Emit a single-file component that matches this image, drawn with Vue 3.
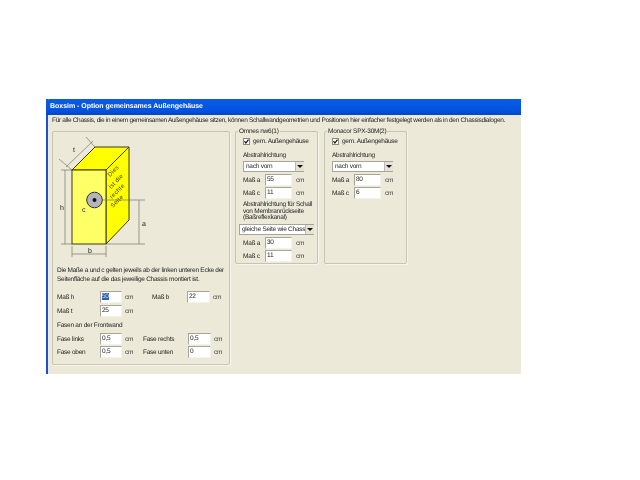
<script setup>
const chassis = [
  {
    name: 'Omnes nw6(1)', cls: 'g-omnes', a: '55', c: '11',
    back: { a: '30', c: '11' }
  },
  { name: 'Monacor SPX-30M(2)', cls: 'g-monacor', a: '80', c: '6' }
]
</script>

<template>
  <div class="page">
    <div class="window">
      <div class="title">Boxsim - Option gemeinsames Außengehäuse</div>
      <div class="body">
        <p class="intro">Für alle Chassis, die in einem gemeinsamen Außengehäuse sitzen, können Schallwandgeometrien und Positionen hier einfacher festgelegt werden als in den Chassisdialogen.</p>
        <div class="panels">
          <div class="group g-main">
            <svg class="diagram" width="120" height="128" viewBox="52 131 120 128">
              <g fill="none" stroke="#77776a" stroke-width="0.7">
                <path d="M60 169H71M60 243H71M64 169V243" />
                <path d="M71 169L58 158M94 146L85 136M65 166L92 140" />
                <path d="M105 243H144M102 199H144M138 199V243" />
                <path d="M71 253H105M71 245V256M105 245V256" />
                <path d="M71 213H94M94 207V216" />
              </g>
              <path d="M71 169L94 146H128L105 169Z" fill="#ffff00" stroke="#3a3a10" />
              <path d="M105 169L128 146V219L105 243Z" fill="#ffff00" stroke="#3a3a10" />
              <rect x="71" y="169" width="34" height="74" fill="#ffff66" stroke="#3a3a10" />
              <path d="M102 199H128" fill="none" stroke="#77776a" stroke-width="0.7" />
              <circle cx="93.5" cy="199" r="7.8" fill="#b4b4bc" stroke="#333" stroke-width="1" />
              <circle cx="93.5" cy="199" r="2" fill="#111" />
              <g class="side-text">
                <text transform="translate(109 176) rotate(-45)">Dies</text>
                <text transform="translate(110 188) rotate(-45)">ist die</text>
                <text transform="translate(111 198) rotate(-45)">rechte</text>
                <text transform="translate(112 207) rotate(-45)">Seite</text>
              </g>
              <g class="dim">
                <text x="72" y="151">t</text>
                <text x="59" y="209">h</text>
                <text x="81" y="211">c</text>
                <text x="141" y="225">a</text>
                <text x="87" y="252">b</text>
              </g>
            </svg>
            <p class="note">Die Maße a und c gelten jeweils ab der linken unteren Ecke der<br />Seitenfläche auf die das jeweilige Chassis montiert ist.</p>
            <div class="row r1">
              <span class="lab l43">Maß h</span><span class="inp sel-inp w22"><i>50</i></span><span class="cm">cm</span>
              <span class="lab l35 gap-b">Maß b</span><span class="inp w23">22</span><span class="cm">cm</span>
            </div>
            <div class="row r2">
              <span class="lab l43">Maß t</span><span class="inp w22">25</span><span class="cm">cm</span>
            </div>
            <div class="sub">Fasen an der Frontwand</div>
            <div class="row r3">
              <span class="lab l43">Fase links</span><span class="inp w22">0,5</span><span class="cm">cm</span>
              <span class="lab l45 gap-f">Fase rechts</span><span class="inp w23">0,5</span><span class="cm">cm</span>
            </div>
            <div class="row r4">
              <span class="lab l43">Fase oben</span><span class="inp w22">0,5</span><span class="cm">cm</span>
              <span class="lab l45 gap-f">Fase unten</span><span class="inp w23">0</span><span class="cm">cm</span>
            </div>
          </div>

          <div v-for="c in chassis" :key="c.name" class="group" :class="c.cls">
            <span class="legend">{{ c.name }}</span>
            <div class="check">
              <svg width="7" height="7" viewBox="0 0 7 7"><rect x="0.5" y="0.5" width="6" height="6" fill="#fff" stroke="#8a8a7a" /><path d="M1.5 3.2L2.9 5L5.5 1.6" fill="none" stroke="#111" stroke-width="1.2" /></svg>
              <span>gem. Außengehäuse</span>
            </div>
            <div class="dir">Abstrahlrichtung</div>
            <div class="combo"><span>nach vorn</span><b class="arrow"></b></div>
            <div class="pair"><span class="lab l22">Maß a</span><span class="inp w27">{{ c.a }}</span><span class="cm">cm</span></div>
            <div class="pair"><span class="lab l22">Maß c</span><span class="inp w27">{{ c.c }}</span><span class="cm">cm</span></div>
            <template v-if="c.back">
              <div class="back">Abstrahlrichtung für Schall<br />von Membranrückseite<br />(Baßreflexkanal)</div>
              <div class="combo wide"><span class="clip">gleiche Seite wie Chass</span><b class="arrow"></b></div>
              <div class="pair"><span class="lab l22">Maß a</span><span class="inp w27">{{ c.back.a }}</span><span class="cm">cm</span></div>
              <div class="pair"><span class="lab l22">Maß c</span><span class="inp w27">{{ c.back.c }}</span><span class="cm">cm</span></div>
            </template>
          </div>
        </div>
      </div>
    </div>
  </div>
</template>

<style>
html, body { margin: 0; background: #fff; }
</style>

<style scoped>
.page {
  width: 640px;
  height: 480px;
  padding: 99px 0 0 46px;
  box-sizing: border-box;
  overflow: hidden;
  background: #fff;
  font-family: "Liberation Sans", Arial, sans-serif;
  font-size: 6.5px;
  letter-spacing: -0.25px;
  text-rendering: geometricPrecision;
  color: #1c1c1c;
}
.window {
  width: 475px;
  height: 275px;
  display: flex;
  flex-direction: column;
  border-left: 2px solid #1d50cc;
  box-sizing: border-box;
  filter: blur(0.3px);
}
.title {
  height: 16px;
  margin-left: -2px;
  padding-left: 4px;
  line-height: 16px;
  font-size: 7px;
  font-weight: bold;
  letter-spacing: -0.03px;
  color: #fff;
  border-top-left-radius: 4px;
  background: linear-gradient(#0a5ce6, #0353e0 70%, #0246c4);
}
.body {
  flex: 1;
  background: #ece9d8;
  padding: 0 0 0 4px;
  min-height: 0;
}
.intro {
  margin: 0;
  height: 16px;
  line-height: 12px;
  letter-spacing: -0.31px;
  white-space: nowrap;
}
.panels {
  display: flex;
  align-items: flex-start;
  gap: 6px;
}
.group {
  position: relative;
  flex: none;
  box-sizing: border-box;
  border: 1px solid #c6c4b2;
  border-radius: 2px;
  box-shadow: 1px 1px 0 #f6f5ec;
}
.legend {
  position: absolute;
  top: -5px;
  left: 2px;
  padding: 0 1px;
  line-height: 9px;
  background: #ece9d8;
  white-space: nowrap;
}
.g-main {
  width: 178px;
  height: 234px;
  margin-right: -1px;
}
.g-omnes {
  width: 83px;
  height: 133px;
  padding: 5px 0 0 7px;
}
.g-monacor {
  width: 83px;
  height: 133px;
  padding: 5px 0 0 7px;
}
.diagram { display: block; }
.note {
  margin: 6px 0 0 4px;
  line-height: 9px;
  white-space: nowrap;
}
.row {
  display: flex;
  align-items: center;
  height: 12px;
  padding-left: 4px;
  white-space: nowrap;
}
.r1 { margin-top: 7px; }
.r2 { margin-top: 2px; }
.sub { margin: 4px 0 0 4px; line-height: 9px; height: 9px; }
.r3 { margin-top: 3px; }
.r4 { margin-top: 1px; }
.lab { display: block; flex: none; white-space: nowrap; }
.l43 { width: 43px; }
.l35 { width: 35px; }
.l45 { width: 45px; }
.l22 { width: 22px; }
.gap-b { margin-left: 11px; }
.gap-f { margin-left: 2px; }
.inp {
  display: block;
  flex: none;
  box-sizing: border-box;
  height: 12px;
  line-height: 10px;
  padding-left: 1px;
  background: #fff;
  border: 1px solid;
  border-color: #a5a598 #f4f3ea #f4f3ea #a5a598;
}
.inp i { font-style: normal; background: #2d5fb8; color: #cfd8ea; }
.w22 { width: 22px; }
.w23 { width: 23px; }
.w27 { width: 27px; }
.cm { display: block; flex: none; width: 16px; margin-left: 3px; color: #3c3c3c; }
.pair .cm { margin-left: 4px; }
.check {
  display: flex;
  align-items: center;
  gap: 3px;
  height: 9px;
  white-space: nowrap;
}
.dir { margin-top: 5px; line-height: 9px; }
.combo {
  display: flex;
  align-items: center;
  justify-content: space-between;
  box-sizing: border-box;
  width: 61px;
  height: 11px;
  margin-top: 1px;
  padding-left: 2px;
  background: #fff;
  border: 1px solid #a5a598;
  border-right-width: 0;
  white-space: nowrap;
  overflow: hidden;
}
.combo.wide {
  width: 75px;
  margin-left: -4px;
  margin-top: 2px;
}
.arrow {
  position: relative;
  flex: none;
  width: 8px;
  height: 9px;
  background: #e6e3d4;
  border-left: 1px solid #bbb;
}
.arrow::after {
  content: "";
  position: absolute;
  left: 1px;
  top: 3px;
  border: 3px solid transparent;
  border-top: 3px solid #111;
  border-bottom: 0;
}
.pair {
  display: flex;
  align-items: center;
  height: 12px;
  margin-top: 1px;
}
.combo + .pair { margin-top: 2px; }
.back {
  margin-top: 3px;
  line-height: 6.7px;
  white-space: nowrap;
}
.side-text text { font-size: 6px; letter-spacing: 0.3px; fill: #444400; }
.dim text { font-size: 7px; letter-spacing: 0; fill: #222; }
</style>
